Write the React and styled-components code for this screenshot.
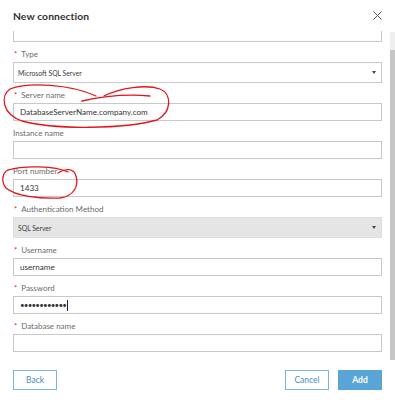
import React from "react";
import styled, { createGlobalStyle } from "styled-components";

const Global = createGlobalStyle`
  html, body { margin: 0; padding: 0; background: #fff; }
  body { font-family: Lato, "Noto Sans", sans-serif; }
  * { box-sizing: border-box; }
`;

const Dialog = styled.div`
  position: relative;
  width: 395px;
  height: 400px;
  display: flex;
  flex-direction: column;
  background: #fff;
  overflow: hidden;
`;

const Header = styled.header`
  flex: 0 0 31px;
  display: flex;
  align-items: center;
  justify-content: space-between;
  padding: 0 13px;
`;

const Title = styled.h2`
  margin: 0;
  font-size: 10.3px;
  font-weight: 700;
  color: #323232;
  letter-spacing: 0.1px;
`;

const CloseButton = styled.button`
  border: 0;
  background: none;
  padding: 0;
  width: 10px;
  height: 10px;
  display: flex;
  align-items: center;
  justify-content: center;
  cursor: pointer;
`;

const Body = styled.div`
  flex: 0 0 329px;
  display: flex;
  min-height: 0;
`;

const Viewport = styled.div`
  flex: 1;
  min-width: 0;
  overflow: hidden;
  display: flex;
  flex-direction: column;
  justify-content: flex-end;
  padding: 0 8px 8px 13px;
`;

const ScrollTrack = styled.div`
  flex: 0 0 5px;
  margin-top: 1px;
  padding-top: 18px;
  display: flex;
  flex-direction: column;
  background: #efefef;
`;

const ScrollThumb = styled.div`
  flex: 1;
  background: #c6c6c6;
`;

const Field = styled.div`
  flex: 0 0 auto;
  display: flex;
  flex-direction: column;
  margin-bottom: 5px;
  &:last-child { margin-bottom: 0; }
`;

const Label = styled.label`
  height: 14px;
  line-height: 14px;
  margin-bottom: 1px;
  font-size: 8px;
  color: #6b6b6b;
  white-space: nowrap;
`;

const Required = styled.span`
  color: #d83020;
  font-size: 7.5px;
  margin: 0 4px 0 1px;
`;

const TextInput = styled.input`
  display: block;
  width: 100%;
  height: 18px;
  border: 1px solid #c8c8c8;
  padding: 0 6px;
  font-family: inherit;
  font-size: 8.1px;
  color: #363636;
  background: #fff;
  outline: none;
`;

const MaskedBox = styled.div`
  display: flex;
  align-items: center;
  height: 18px;
  border: 1px solid #c8c8c8;
  padding: 0 6px;
  background: #fff;
`;

const Dots = styled.span`
  font-size: 8px;
  letter-spacing: -0.8px;
  color: #333;
  line-height: 1;
`;

const TextCursor = styled.span`
  width: 1px;
  height: 11px;
  margin-left: 1px;
  background: #222;
`;

const Select = styled.div`
  display: flex;
  align-items: center;
  justify-content: space-between;
  height: 21px;
  padding: 0 5px 0 4px;
  border: 1px solid ${(p) => (p.$disabled ? "#dedede" : "#cacaca")};
  background: ${(p) => (p.$disabled ? "#e5e5e5" : "#fff")};
  font-size: 6.8px;
  color: #3c3c3c;
`;

const Caret = styled.span`
  width: 0;
  height: 0;
  border-left: 2.5px solid transparent;
  border-right: 2.5px solid transparent;
  border-top: 3px solid #444;
`;

const Footer = styled.footer`
  flex: 1 1 auto;
  display: flex;
  align-items: flex-start;
  gap: 9px;
  padding: 10px 13px 0 13px;
`;

const Spacer = styled.div`
  flex: 1;
`;

const Button = styled.button`
  width: 44px;
  height: 20px;
  padding: 0;
  font-family: inherit;
  font-size: 8.5px;
  font-weight: ${(p) => (p.$primary ? 700 : 400)};
  border: 1px solid ${(p) => (p.$primary ? "#5aa5d8" : "#7cb5df")};
  background: ${(p) => (p.$primary ? "#5aa5d8" : "#fff")};
  color: ${(p) => (p.$primary ? "#fff" : "#4a8cc4")};
  cursor: pointer;
`;

const Annotations = styled.svg`
  position: absolute;
  left: 0;
  top: 0;
  pointer-events: none;
`;

const fields = [
  { label: "Type", required: true, select: "Microsoft SQL Server" },
  { label: "Server name", required: true, value: "DatabaseServerName.company.com" },
  { label: "Instance name", value: "" },
  { label: "Port number", value: "1433" },
  { label: "Authentication Method", required: true, select: "SQL Server", disabled: true },
  { label: "Username", required: true, value: "username" },
  { label: "Password", required: true, password: true },
  { label: "Database name", required: true, value: "" },
];

export default function App() {
  return (
    <>
      <Global />
      <Dialog>
        <Header>
          <Title>New connection</Title>
          <CloseButton aria-label="Close">
            <svg width="9" height="9" viewBox="0 0 9 9">
              <path d="M0.5 0.5 L8.5 8.5 M8.5 0.5 L0.5 8.5" stroke="#555" strokeWidth="1" fill="none" />
            </svg>
          </CloseButton>
        </Header>
        <Body>
          <Viewport>
            <Field>
              <TextInput readOnly defaultValue="" aria-label="Connection name" />
            </Field>
            {fields.map((f) => (
              <Field key={f.label}>
                <Label>
                  {f.required && <Required>*</Required>}
                  {f.label}
                </Label>
                {f.select ? (
                  <Select $disabled={f.disabled}>
                    <span>{f.select}</span>
                    <Caret />
                  </Select>
                ) : f.password ? (
                  <MaskedBox>
                    <Dots>••••••••••••</Dots>
                    <TextCursor />
                  </MaskedBox>
                ) : (
                  <TextInput readOnly defaultValue={f.value} />
                )}
              </Field>
            ))}
          </Viewport>
          <ScrollTrack>
            <ScrollThumb />
          </ScrollTrack>
        </Body>
        <Footer>
          <Button>Back</Button>
          <Spacer />
          <Button>Cancel</Button>
          <Button $primary>Add</Button>
        </Footer>
        <Annotations width="395" height="400" viewBox="0 0 395 400">
          <g stroke="#e4141b" strokeWidth="1.3" fill="none" strokeLinecap="round">
            <path d="M150 96 C128 94, 104 96, 82 101" />
            <path d="M96 96 C70 84, 28 82, 10 89 C0 96, 2 114, 22 121 C55 130, 125 129, 157 120 C172 112, 172 94, 160 89 C146 84, 120 88, 104 96" />
            <path d="M8 170 C25 165, 55 166, 68 172" />
            <path d="M58 173 C65 168, 74 168, 76 176 C79 186, 74 196, 60 198 C40 199, 15 196, 6 188 C1 182, 2 173, 8 170" />
          </g>
        </Annotations>
      </Dialog>
    </>
  );
}
